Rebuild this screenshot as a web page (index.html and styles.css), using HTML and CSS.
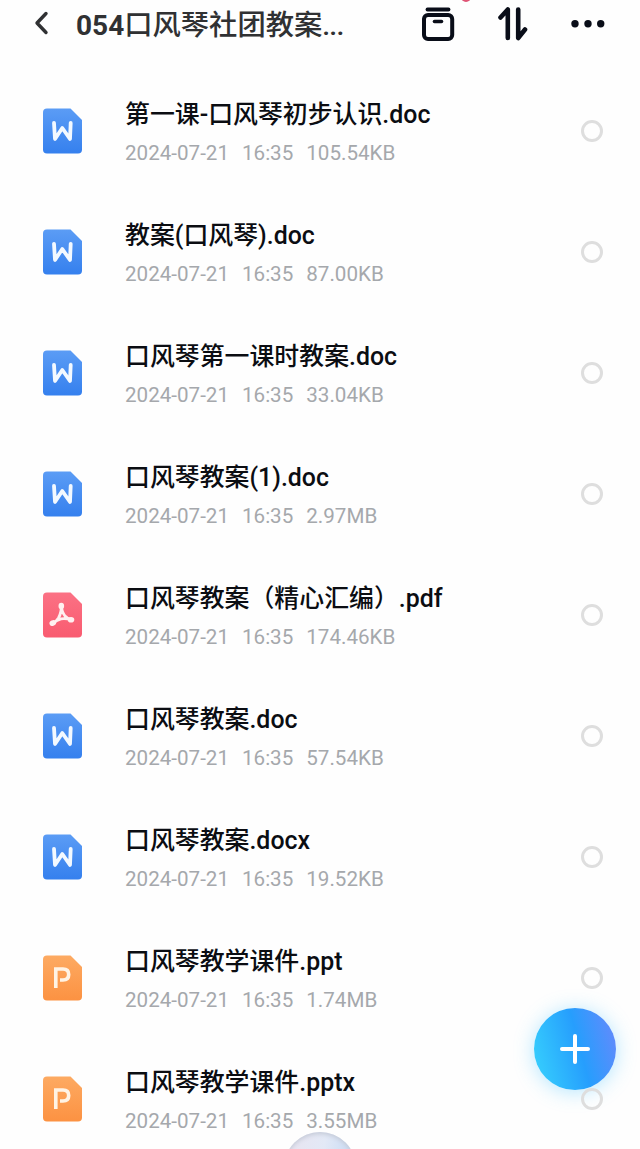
FILE: index.html
```
<!DOCTYPE html>
<html lang="zh-CN">
<head>
  <meta charset="UTF-8">
  <meta name="viewport" content="width=device-width, initial-scale=1.0">
  <title>054口风琴社团教案</title>
  <link rel="stylesheet" href="styles.css">
</head>
<body>

  <!-- Shared file icons -->
  <svg class="sprite" width="0" height="0">
    <defs>
      <linearGradient id="blue" x1="0" y1="0" x2="0" y2="1">
        <stop offset="0" stop-color="#5b9cf5"/>
        <stop offset="1" stop-color="#3580ee"/>
      </linearGradient>
      <linearGradient id="red" x1="0" y1="0" x2="0" y2="1">
        <stop offset="0" stop-color="#fb7184"/>
        <stop offset="1" stop-color="#f95b70"/>
      </linearGradient>
      <linearGradient id="orange" x1="0" y1="0" x2="0" y2="1">
        <stop offset="0" stop-color="#fdaa62"/>
        <stop offset="1" stop-color="#fc9242"/>
      </linearGradient>
    </defs>
    <symbol id="icon-doc" viewBox="0 0 39 46">
      <path d="M4 0.5H27.500L39 12V41.500Q39 45.500 35 45.500H4Q0 45.500 0 41.500V4.500Q0 0.500 4 0.500Z" fill="url(#blue)"/>
      <path d="M11 14.800L12 31L19.300 20L27 31L27.700 14.800" fill="none" stroke="#f3f9ff" stroke-width="3.800" stroke-linejoin="round" stroke-linecap="round"/>
    </symbol>
    <symbol id="icon-pdf" viewBox="0 0 39 46">
      <path d="M4 0.500H27.500L39 12V41.500Q39 45.500 35 45.500H4Q0 45.500 0 41.500V4.500Q0 0.500 4 0.500Z" fill="url(#red)"/>
      <path d="M18.300 13Q18.800 20 15.500 26Q12.500 30.500 9.500 31.700M18.300 13Q18.500 19.500 22 24Q25 27.500 29 28M9.500 31.700Q13 28 18 26.800Q23 26 29 28" fill="none" stroke="#fff0f0" stroke-width="2.800" stroke-linecap="round"/>
      <g fill="#fff0f0">
        <ellipse cx="18.300" cy="14" rx="2.800" ry="3.200"/>
        <ellipse cx="9.800" cy="31" rx="3.400" ry="2.800" transform="rotate(-25 9.800 31)"/>
        <ellipse cx="28" cy="27.700" rx="3.300" ry="2.800"/>
      </g>
    </symbol>
    <symbol id="icon-ppt" viewBox="0 0 39 46">
      <path d="M4 0.500H27.500L39 12V41.500Q39 45.500 35 45.500H4Q0 45.500 0 41.500V4.500Q0 0.500 4 0.500Z" fill="url(#orange)"/>
      <path d="M12.800 33V14H20Q25.700 14 25.700 19.500Q25.700 25 20 25H17" fill="none" stroke="#fff3e4" stroke-width="3.600"/>
    </symbol>
  </svg>

  <header class="top-bar">
    <svg class="back" width="16" height="26" viewBox="0 0 16 26">
      <path d="M13 3.500L4 13L13 22.500" fill="none" stroke="#303133" stroke-width="3.400" stroke-linecap="round" stroke-linejoin="round"/>
    </svg>
    <h1><b>054</b>口风琴社团教案<span>...</span></h1>
    <div class="actions">
      <span class="archive">
        <svg width="34" height="36" viewBox="0 0 34 36">
          <g fill="none" stroke="#090d18" stroke-width="4" stroke-linecap="round">
            <path d="M6.500 3.500H27.500" stroke-width="3.800"/>
            <rect x="3" y="9" width="28.200" height="24" rx="4"/>
            <path d="M13.500 15.500H20.500" stroke-width="3.600"/>
          </g>
        </svg>
        <i class="dot"></i>
      </span>
      <svg class="sort" width="30" height="36" viewBox="0 0 30 36">
        <path d="M2.500 11.500L9.800 3.500V32M27 23.500L20.200 32V3.500" fill="none" stroke="#090d18" stroke-width="4.600" stroke-linecap="round" stroke-linejoin="round"/>
      </svg>
      <svg class="more" width="34" height="8" viewBox="0 0 34 8" fill="#090d18">
        <circle cx="4" cy="3.700" r="3.700"/>
        <circle cx="17" cy="3.700" r="3.700"/>
        <circle cx="29.700" cy="3.700" r="3.700"/>
      </svg>
    </div>
  </header>

  <ul class="file-list">
    <li class="file">
      <svg class="file-icon"><use href="#icon-doc"/></svg>
      <div class="info">
        <h2>第一课-口风琴初步认识.doc</h2>
        <p><span>2024-07-21</span><span>16:35</span><span>105.54KB</span></p>
      </div>
      <span class="check"></span>
    </li>
    <li class="file">
      <svg class="file-icon"><use href="#icon-doc"/></svg>
      <div class="info">
        <h2>教案(口风琴).doc</h2>
        <p><span>2024-07-21</span><span>16:35</span><span>87.00KB</span></p>
      </div>
      <span class="check"></span>
    </li>
    <li class="file">
      <svg class="file-icon"><use href="#icon-doc"/></svg>
      <div class="info">
        <h2>口风琴第一课时教案.doc</h2>
        <p><span>2024-07-21</span><span>16:35</span><span>33.04KB</span></p>
      </div>
      <span class="check"></span>
    </li>
    <li class="file">
      <svg class="file-icon"><use href="#icon-doc"/></svg>
      <div class="info">
        <h2>口风琴教案(1).doc</h2>
        <p><span>2024-07-21</span><span>16:35</span><span>2.97MB</span></p>
      </div>
      <span class="check"></span>
    </li>
    <li class="file">
      <svg class="file-icon"><use href="#icon-pdf"/></svg>
      <div class="info">
        <h2>口风琴教案（精心汇编）.pdf</h2>
        <p><span>2024-07-21</span><span>16:35</span><span>174.46KB</span></p>
      </div>
      <span class="check"></span>
    </li>
    <li class="file">
      <svg class="file-icon"><use href="#icon-doc"/></svg>
      <div class="info">
        <h2>口风琴教案.doc</h2>
        <p><span>2024-07-21</span><span>16:35</span><span>57.54KB</span></p>
      </div>
      <span class="check"></span>
    </li>
    <li class="file">
      <svg class="file-icon"><use href="#icon-doc"/></svg>
      <div class="info">
        <h2>口风琴教案.docx</h2>
        <p><span>2024-07-21</span><span>16:35</span><span>19.52KB</span></p>
      </div>
      <span class="check"></span>
    </li>
    <li class="file">
      <svg class="file-icon"><use href="#icon-ppt"/></svg>
      <div class="info">
        <h2>口风琴教学课件.ppt</h2>
        <p><span>2024-07-21</span><span>16:35</span><span>1.74MB</span></p>
      </div>
      <span class="check"></span>
    </li>
    <li class="file">
      <svg class="file-icon"><use href="#icon-ppt"/></svg>
      <div class="info">
        <h2>口风琴教学课件.pptx</h2>
        <p><span>2024-07-21</span><span>16:35</span><span>3.55MB</span></p>
      </div>
      <span class="check"></span>
    </li>
  </ul>

  <!-- Floating buttons -->
  <button class="add" aria-label="添加">
    <svg width="30" height="30" viewBox="0 0 30 30">
      <path d="M15 2V28M2 15H28" stroke="#fff" stroke-width="4" stroke-linecap="round"/>
    </svg>
  </button>
  <div class="assistant"></div>

</body>
</html>
```
FILE: styles.css
```
/* General Styles */
* {
  margin: 0;
  padding: 0;
  box-sizing: border-box;
}

body {
  position: relative;
  height: 1149px;
  overflow: hidden;
  background-color: #fefefe;
  font-family: Roboto, "Noto Sans CJK SC", sans-serif;
}

.sprite {
  position: absolute;
}

/* Top bar */
.top-bar {
  display: flex;
  align-items: center;
  height: 48px;
  padding: 0 35px 0 33px;
}

.back {
  margin: -2px 27px 0 0;
}

h1 {
  padding-top: 3px;
  font-size: 28.3px;
  line-height: 45px;
  font-weight: 500;
  color: #303133;
  white-space: nowrap;
}

h1 b {
  font-size: 28px;
  font-weight: 700;
}

h1 span {
  letter-spacing: -0.8px;
}

.actions {
  display: flex;
  align-items: center;
  margin-left: auto;
}

.archive {
  position: relative;
  height: 36px;
  margin-right: 43px;
}

.dot {
  position: absolute;
  top: -14px;
  left: 40px;
  width: 10px;
  height: 10px;
  border-radius: 50%;
  background-color: #df5475;
}

.sort {
  margin-right: 43px;
}

/* File list */
.file-list {
  list-style: none;
  padding-top: 22px;
}

.file {
  display: flex;
  align-items: center;
  height: 121px;
  padding: 0 37px 0 43px;
}

.file-icon {
  width: 39px;
  height: 46px;
  margin-right: 43px;
}

.info {
  flex: 1;
  padding-top: 7px;
}

h2 {
  font-size: 24.9px;
  line-height: 38px;
  font-weight: 500;
  color: #0b0d12;
  white-space: nowrap;
}

.info p {
  display: flex;
  gap: 13px;
  font-size: 20.6px;
  line-height: 38px;
  color: #a5a8ac;
}

.check {
  width: 22px;
  height: 22px;
  border: 3px solid #dedede;
  border-radius: 50%;
}

/* Floating buttons */
.add {
  position: absolute;
  top: 1008px;
  left: 534px;
  display: flex;
  align-items: center;
  justify-content: center;
  width: 82px;
  height: 82px;
  border: none;
  border-radius: 50%;
  background: linear-gradient(75deg, #36cffd 5%, #269efd 55%, #638afc 95%);
  box-shadow: 0 2px 20px rgba(70, 195, 255, 0.4);
}

.file:last-child .check {
  position: relative;
  z-index: 1;
}

.assistant {
  position: absolute;
  top: 1132px;
  left: 284px;
  width: 72px;
  height: 72px;
  border-radius: 50%;
  background: linear-gradient(100deg, #e9e3ef, #e3e9f6 50%, #bdd5f3);
  box-shadow: inset 0 2px 4px #c5cbd8;
}
```
